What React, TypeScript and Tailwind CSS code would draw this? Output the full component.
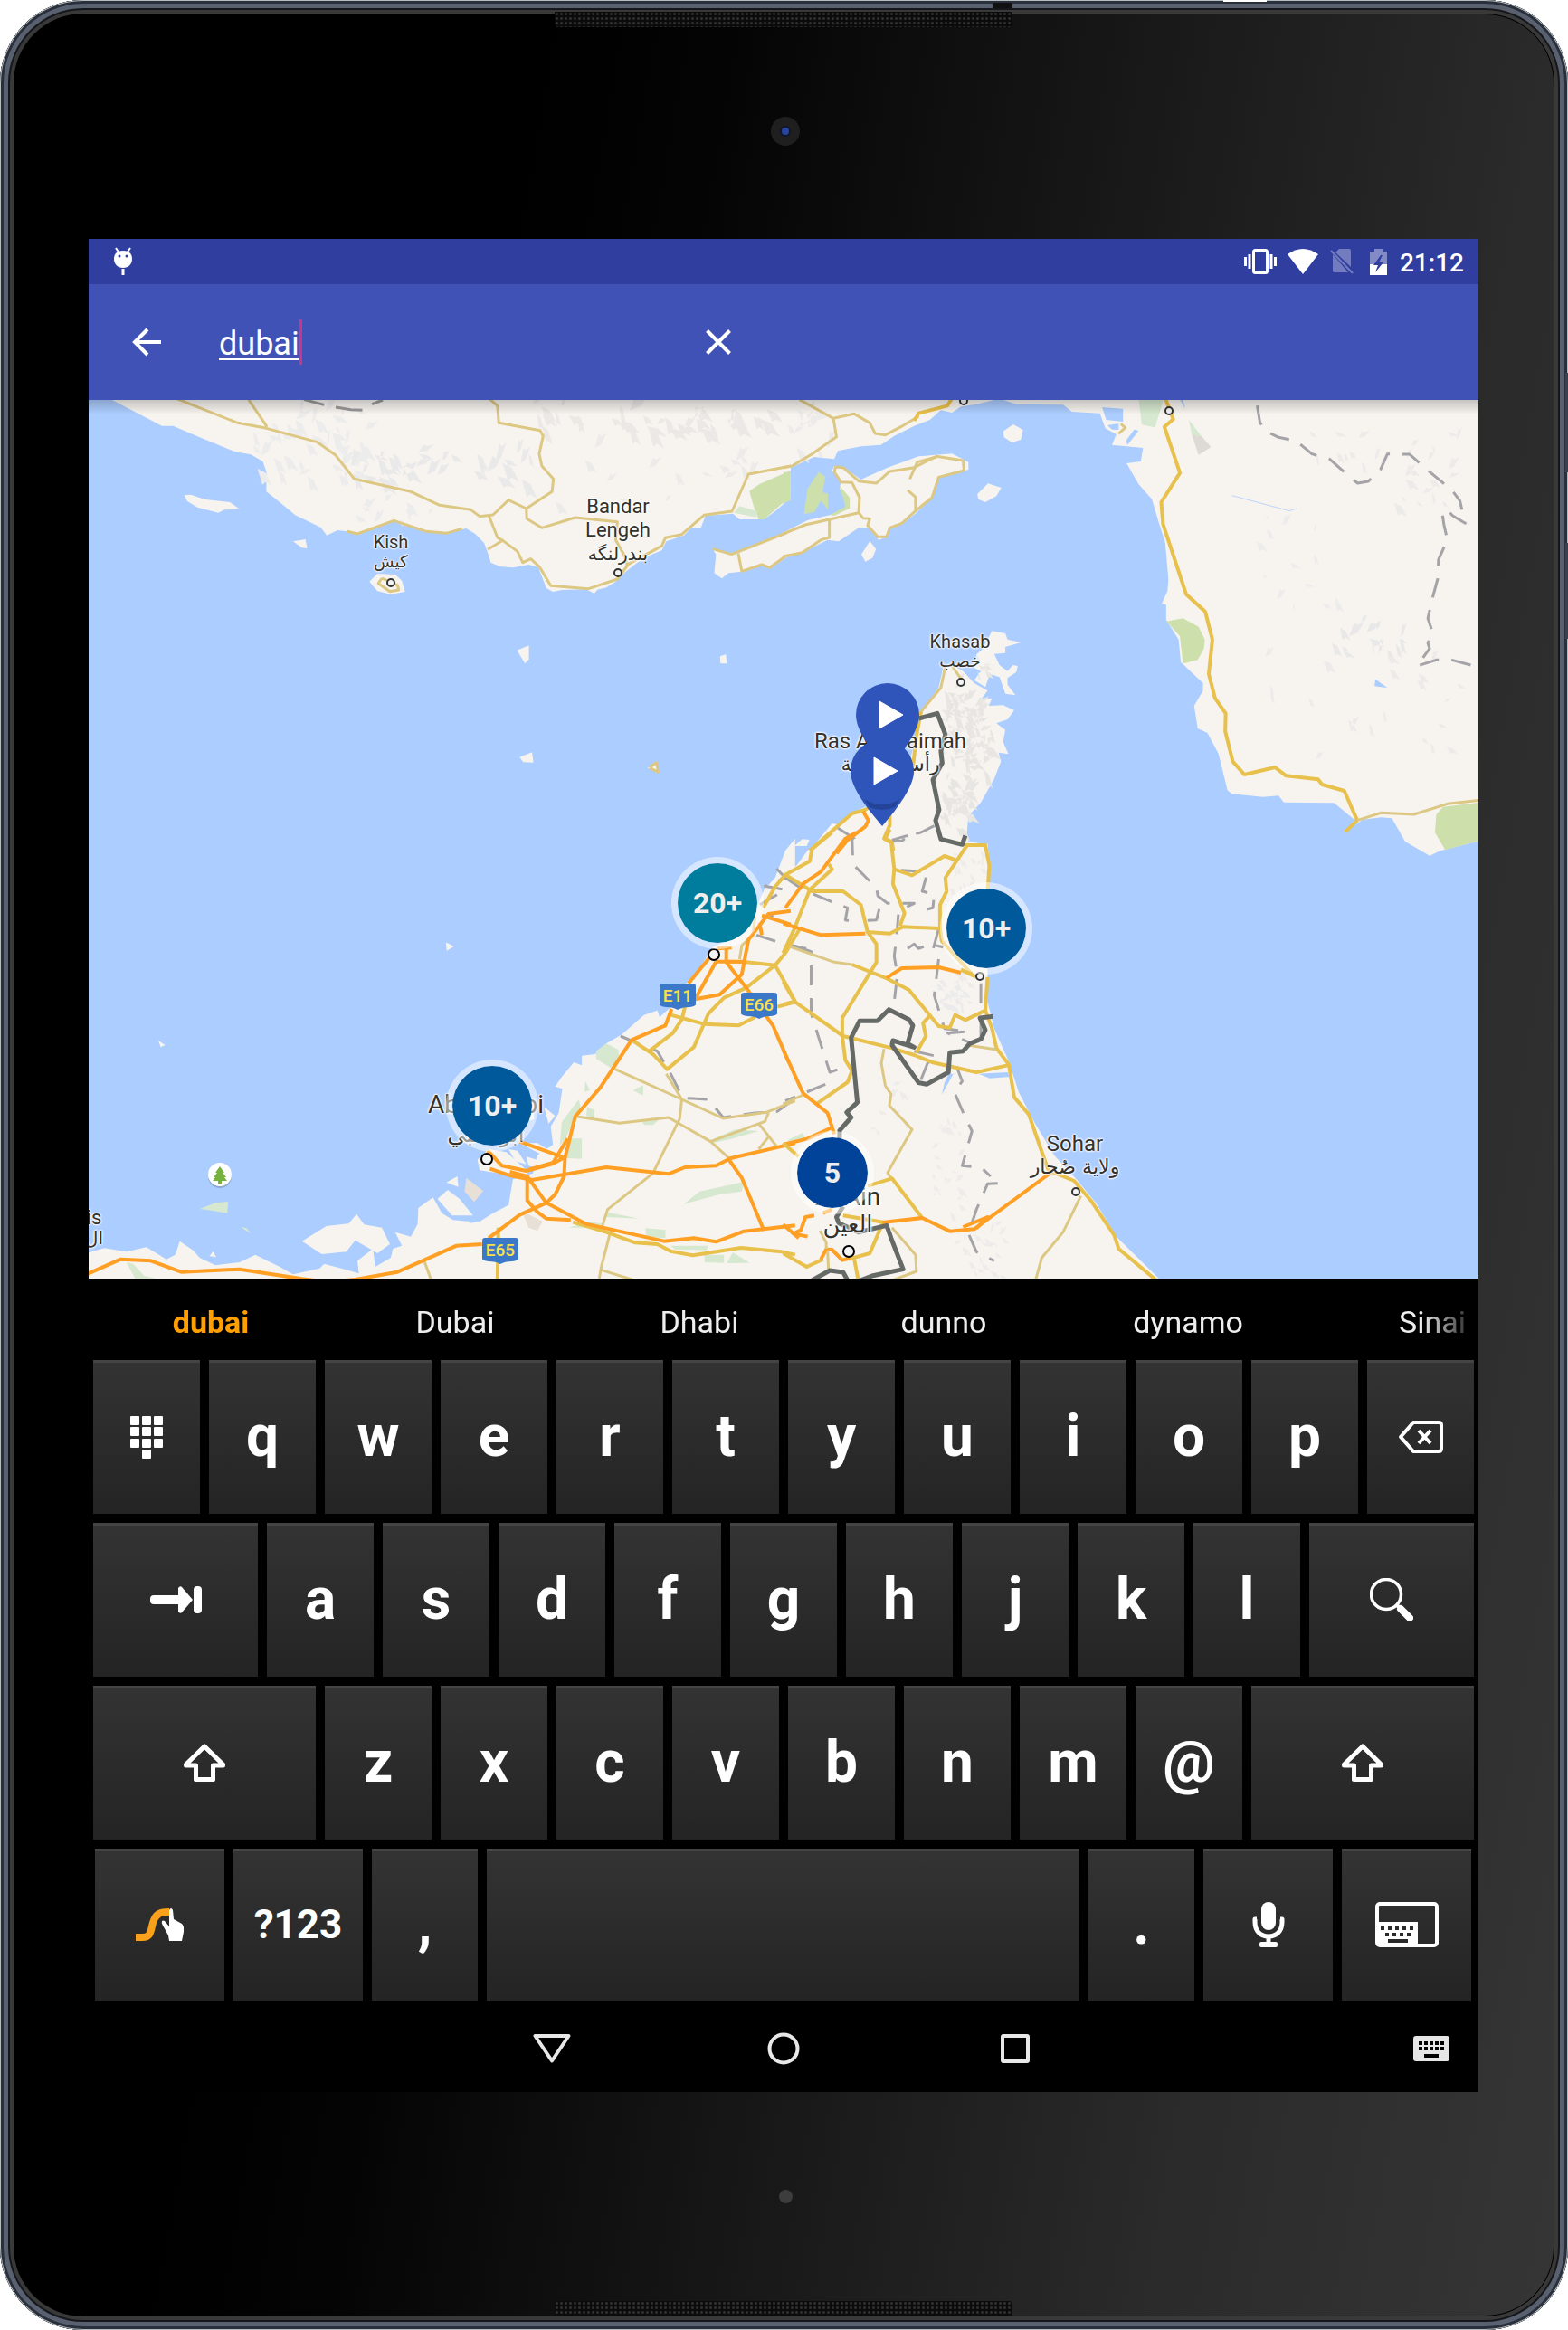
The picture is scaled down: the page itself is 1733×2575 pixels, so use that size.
import React from "react";

type Pts = string;

/* Small irregular patches that suggest hill shading inside a rectangle. */
function relief(seed: number, count: number, x: number, y: number, w: number, h: number, size: number): string {
  let s = seed;
  const rnd = () => {
    s = (s * 16807) % 2147483647;
    return s / 2147483647;
  };
  let d = "";
  for (let i = 0; i < count; i++) {
    const cx = x + rnd() * w;
    const cy = y + rnd() * h;
    const a = size * (0.3 + rnd());
    const b = size * (0.4 + rnd()) * (rnd() > 0.3 ? 1 : -1);
    d += `M${cx.toFixed(0)} ${cy.toFixed(0)}l${(a * 0.5).toFixed(0)} ${(b * 0.3).toFixed(0)}l${(a * 0.4).toFixed(0)} ${b.toFixed(0)}l${(-a * 0.4).toFixed(0)} ${(-b * 0.3).toFixed(0)}l${(-a * 0.2).toFixed(0)} ${(b * 0.2).toFixed(0)}z`;
  }
  return d;
}

const Land = ({ p }: { p: Pts }) => <polygon points={p} fill="#f7f4ef" />;
const Water = ({ p }: { p: Pts }) => <polygon points={p} fill="#accdff" />;
const Park = ({ p, soft }: { p: Pts; soft?: boolean }) => <polygon points={p} fill={soft ? "#d6e8cf" : "#cddfab"} />;

const LINE: Record<string, { stroke: string; width: number; dash?: string }> = {
  tan: { stroke: "#dcc783", width: 3 },
  yellow: { stroke: "#e8c04c", width: 4 },
  orange: { stroke: "#ff9f24", width: 4 },
  border: { stroke: "#666a67", width: 5 },
  admin: { stroke: "#a4a4a8", width: 3, dash: "22 14" },
};

function Line({ k, p }: { k: keyof typeof LINE; p: Pts }) {
  const l = LINE[k];
  return (
    <polyline
      points={p}
      fill="none"
      stroke={l.stroke}
      strokeWidth={l.width}
      strokeDasharray={l.dash}
      strokeLinejoin="round"
      vectorEffect="non-scaling-stroke"
    />
  );
}

const NW = "translate(0 -2) scale(.49107 .33333)";
const NE = "translate(770 -2) scale(.49107 .33333)";
const SW = "translate(0 478) scale(.49107 .33333)";
const SE = "translate(770 478) scale(.49107 .33333)";

function Town({ x, y, big }: { x: number; y: number; big?: boolean }) {
  return <circle cx={x} cy={y} r={big ? 6 : 4} fill="#f4f4f4" stroke={big ? "#000" : "#333"} strokeWidth={2} />;
}

function Pin({ x, y }: { x: number; y: number }) {
  return (
    <g>
      <path
        d={`M${x} ${y - 35}a35 35 0 0 1 35 35c0 16-14 34-21 44l-14 17l-14-17c-7-10-21-28-21-44a35 35 0 0 1 35-35z`}
        fill="#2f55ba"
      />
      <path d={`M${x - 9} ${y - 15}l26 15l-26 15z`} fill="#fff" stroke="#fff" strokeLinejoin="round" />
    </g>
  );
}

function Shield({ x, y, t }: { x: number; y: number; t: string }) {
  return (
    <g>
      <path d={`M${x + 3} ${y}h34q3 0 3 3v20q0 2-7 3q-8 0-13 3q-5-3-13-3q-7-1-7-3v-20q0-3 3-3z`} fill="#3c78c8" />
      <text x={x + 20} y={y + 20} textAnchor="middle" fontSize="19" fontWeight="500" fill="#fbe04d">
        {t}
      </text>
    </g>
  );
}

function MapDrawing() {
  return (
    <svg
      className="absolute inset-0 h-full w-full font-[Roboto,sans-serif]"
      viewBox="0 0 1536 971"
      preserveAspectRatio="xMidYMid slice"
      role="img"
      aria-label="Map of the Persian Gulf"
    >
      <rect width="1536" height="971" fill="#accdff" />

      {/* land */}
      <g transform={NW}>
        <Land p="45,0 165,92 190,92 250,130 330,178 365,187 392,210 400,245 400,310 430,345 465,388 522,428 536,455 560,438 590,443 605,452 687,408 760,440 800,448 850,432 870,450 890,480 900,520 905,545 925,558 955,562 990,552 1012,560 1030,630 1045,642 1065,636 1120,634 1138,648 1145,635 1165,628 1185,610 1205,580 1235,545 1265,520 1290,505 1300,475 1340,455 1355,432 1378,430 1388,390 1450,383 1465,402 1520,402 1545,375 1580,330 1580,0" />
        <path d={relief(7, 30, 370, 20, 260, 150, 34)} fill="#edecec" />
        <path d={relief(13, 16, 380, 170, 220, 90, 32)} fill="#edecec" />
        <path d={relief(19, 34, 590, 180, 400, 90, 36)} fill="#eae9ea" />
        <path d={relief(23, 40, 1000, 20, 540, 80, 40)} fill="#ebe8e6" />
        <path d={relief(91, 16, 1050, 150, 440, 200, 30)} fill="#ecebea" />
        <path d={relief(5, 10, 600, 330, 180, 90, 28)} fill="#edecec" />
        <Park p="1580,240 1510,285 1487,308 1497,360 1508,402 1520,402 1560,350 1580,340" />
        <Park soft p="1465,358 1505,375 1503,395 1452,380" />
        <Land p="215,322 230,320 262,336 318,345 340,368 305,370 292,380 245,362 222,342" />
        <Land p="460,475 488,468 492,498 480,496" />
        <Land p="632,608 650,582 690,585 705,605 712,642 680,650 650,640" />
        <Land p="964,836 991,820 991,865 982,880" />
        <Land p="1421,856 1434,850 1437,880 1422,880" />
        <Land p="970,1190 998,1174 1001,1208 978,1207" />
        <Land p="1258,1226 1278,1204 1285,1242" />
        <Land p="1405,500 1445,515 1580,445 1580,520 1533,565 1515,555 1470,575 1440,580 1425,598 1408,580 1412,520" />
      </g>
      <g transform={NE}>
        <Land p="-8,0 -8,245 20,225 65,195 110,202 118,175 170,160 215,155 245,125 290,92 325,72 350,40 375,48 395,28 430,20 470,6 480,0" />
        <path d={relief(3, 12, 5, 30, 90, 150, 34)} fill="#ecebea" />
        <Park p="-4,245 12,245 8,300 -4,320" />
        <Park p="75,245 90,260 84,312 96,318 96,370 80,340 65,378 42,385 50,300" />
        <Land p="-8,448 50,405 100,388 140,365 145,340 122,300 125,280 105,240 110,225 130,228 170,270 230,230 300,193 375,184 412,212 412,237 345,262 330,330 295,380 265,415 235,435 230,460 210,470 190,430 165,430 120,475 95,470 40,510 -8,530" />
        <Park p="122,290 145,330 145,365 110,390 100,388 135,360" />
        <Land p="490,110 513,87 535,105 530,138 510,147 492,130" />
        <Land p="432,318 456,283 486,297 475,325 450,345 434,335" />
        <Land p="190,474 204,500 196,530 180,542 171,518" />
        <Land p="478,0 520,20 625,22 645,45 708,50 720,100 745,120 735,155 805,165 800,210 768,216 795,285 825,335 840,410 855,480 862,600 860,640 847,682 857,685 857,735 885,800 890,875 940,945 940,970 920,1020 928,1095 950,1110 975,1180 995,1300 1005,1312 1075,1322 1110,1318 1122,1340 1235,1342 1283,1400 1255,1440 1300,1397 1340,1390 1365,1393 1395,1470 1450,1517 1475,1500 1575,1463 1580,0" />
        <Water p="713,30 760,35 760,78 722,72" />
        <Water p="725,90 750,84 750,105 735,104" />
        <Water p="785,104 795,108 770,155 767,140" />
        <Water p="888,5 895,5 900,35" />
        <Water p="1328,932 1355,960 1326,955" />
        <Park soft p="795,0 852,0 832,97 802,88" />
        <Park soft p="908,72 936,125 915,122" />
        <polygon points="936,125 958,162 930,188 915,122" fill="#dddad6" />
        <Park p="858,740 895,730 930,758 944,800 942,830 928,868 895,880 888,790" />
        <Park p="1480,1355 1575,1338 1575,1463 1485,1498 1462,1440 1465,1380" />
        <path d={relief(31, 14, 1180, 100, 350, 130, 26)} fill="#ecebea" />
        <path d={relief(37, 14, 1370, 200, 180, 170, 26)} fill="#ecebea" />
        <path d={relief(41, 14, 1060, 330, 180, 370, 22)} fill="#edecec" />
        <path d={relief(43, 16, 1230, 740, 160, 110, 32)} fill="#e8e8e8" />
        <path d={relief(47, 22, 1080, 780, 450, 420, 26)} fill="#ecebea" />
        <polyline points="1005,323 1135,374 1150,366" fill="none" stroke="#bdd5fa" vectorEffect="non-scaling-stroke" />
        {/* Musandam */}
        <Land p="465,772 495,780 500,800 530,810 495,825 495,845 470,848 482,885 500,905 512,885 523,888 520,908 500,928 500,950 518,985 495,980 482,925 460,915 450,958 425,935 440,905 425,895 430,850 445,830" />
        <Land p="355,893 375,885 400,905 425,945 455,970 440,1000 465,995 458,1020 490,1018 515,1035 500,1065 475,1078 495,1100 490,1140 502,1180 480,1175 485,1205 470,1262 440,1340 412,1385 408,1450 412,1470 455,1480 460,1560 20,1560 50,1500 110,1430 150,1375 180,1355 270,1250 290,1150 310,1035 345,960" />
        <path d={relief(53, 34, 350, 960, 90, 130, 30)} fill="#e8e6e3" />
        <path d={relief(57, 40, 350, 1080, 110, 160, 34)} fill="#e8e6e3" />
        <path d={relief(59, 30, 345, 1230, 70, 200, 30)} fill="#e8e6e3" />
        <path d={relief(61, 10, 430, 850, 40, 60, 18)} fill="#e8e6e3" />
      </g>
      <g transform={SW}>
        <Land p="1590,20 1568,60 1545,150 1520,190 1500,260 1480,330 1405,380 1375,450 1345,500 1310,580 1285,612 1280,590 1250,605 1200,670 1165,700 1140,735 1110,740 1110,772 1092,762 1065,810 1050,842 1066,850 1058,930 1040,975 1045,1035 1010,1070 1000,1130 955,1150 945,1235 910,1262 880,1290 840,1300 790,1310 740,1300 725,1340 690,1325 705,1370 685,1380 680,1410 645,1440 640,1380 605,1420 608,1462 580,1450 530,1430 520,1445 460,1465 430,1440 375,1400 340,1425 285,1435 250,1410 235,1385 205,1355 195,1400 175,1415 130,1375 85,1390 35,1378 -5,1395 -5,1510 1590,1510" />
        <Land p="480,1355 535,1305 585,1297 603,1265 620,1300 660,1310 678,1365 650,1395 600,1352 580,1390 525,1398" />
        <Land p="742,1245 775,1210 795,1262 820,1285 860,1290 850,1320 740,1310" />
        <Land p="785,1215 808,1185 835,1215 865,1270 818,1270" />
        <Land p="805,1160 830,1140 832,1175" />
        <polygon points="850,1145 888,1188 868,1225 846,1190" fill="#e8dfd6" />
        <Land p="875,1085 900,1050 940,1060 990,1125 975,1150 925,1130 880,1120" />
        <Land p="945,1050 965,1055 985,1100 960,1090" />
        <Land p="970,1030 1010,1030 1060,1075 1035,1080" />
        <Land p="985,1075 1020,1090 1018,1115 990,1105" />
        <Land p="1025,910 1050,940 1035,965" />
        <Land p="975,915 1000,920 1003,950 985,960" />
        <Land p="804,364 822,378 806,392" />
        <Land p="157,690 172,705 162,712" />
        <Land p="272,1405 280,1388 287,1408" />
        <Park soft p="250,1248 285,1228 314,1224 312,1262 270,1252" />
        <Park soft p="342,1308 355,1312 365,1330" />
        <Park soft p="1165,700 1192,720 1195,755 1180,785 1142,750 1142,725" />
        <Park soft p="1225,855 1248,838 1248,872" />
        <Park soft p="1118,825 1128,855 1116,860" />
        <Park soft p="1103,885 1108,915 1095,945 1075,1010 1060,1040 1065,960" />
        <Park soft p="1122,910 1138,920 1138,945 1120,940" />
        <Park soft p="1077,1015 1110,1015 1110,1082 1075,1080" />
        <Park soft p="1245,958 1285,952 1270,970 1250,970" />
        <Park soft p="1400,1020 1455,985 1508,990 1450,1015 1410,1028" />
        <Park soft p="1340,1232 1375,1190 1475,1158 1470,1190 1420,1200" />
        <Park soft p="1170,1260 1240,1280 1165,1275" />
        <Park soft p="1080,1310 1130,1290 1160,1298 1120,1310" />
        <Park soft p="1253,1312 1298,1318 1298,1345 1255,1340" />
        <Park soft p="1310,1370 1395,1370 1390,1385 1320,1382" />
        <Park soft p="1386,1400 1430,1400 1430,1427 1386,1425" />
        <Park soft p="1436,1428 1450,1392 1488,1427" />
        <Park soft p="85,1425 100,1430 125,1470 155,1480 105,1480" />
        <polygon points="975,1255 1022,1290 1010,1320 990,1310" fill="#e8dfd6" />
      </g>
      <g transform={SE}>
        <Land p="-10,110 0,125 60,90 60,50 105,-30 405,38 455,38 460,110 455,200 455,560 470,650 503,760 525,860 560,960 605,1070 655,1150 700,1230 745,1340 845,1485 845,1510 -10,1510" />
        <Land p="20,45 38,22 54,24 48,45" />
        <Water p="368,800 378,800 352,870 358,830" />
        <Water p="435,800 500,795 505,810 460,815" />
        <Park soft p="5,1020 40,995 45,1020 10,1030" />
        <path d={relief(67, 24, 370, 60, 70, 150, 20)} fill="#eeece9" />
        <path d={relief(71, 28, 340, 460, 70, 120, 22)} fill="#ebebeb" />
        <path d={relief(73, 22, 330, 930, 60, 330, 20)} fill="#eeecea" />
        <path d={relief(79, 20, 380, 1300, 110, 170, 20)} fill="#eeecea" />
        <path d={relief(83, 8, 190, 840, 80, 160, 20)} fill="#eeecea" />
      </g>

      {/* administrative lines */}
      <g transform={NW}>
        <polyline points="485,5 530,22" stroke="#999" strokeWidth="3" vectorEffect="non-scaling-stroke" />
        <polyline points="556,30 590,38 616,40" fill="none" stroke="#999" strokeWidth="3" vectorEffect="non-scaling-stroke" />
        <polyline points="638,20 662,6" stroke="#999" strokeWidth="3" vectorEffect="non-scaling-stroke" />
      </g>
      <g transform={NE}>
        <Line k="admin" p="1062,25 1068,80 1080,108 1110,130 1150,142 1185,185 1225,202 1262,250 1288,282 1312,276 1340,235 1355,185 1405,186 1440,232 1500,305 1518,340 1530,415 1502,390 1490,372 1478,378 1482,418 1490,470 1470,535 1468,600 1457,660 1446,730 1457,778 1446,812 1450,830 1422,888 1465,868 1500,868 1560,892" />
        <Line k="admin" p="118,1425 155,1460 155,1482" />
        <Line k="admin" p="335,1418 305,1440 278,1450 262,1468 235,1470" />
      </g>
      <g transform={SW}>
        <Line k="admin" p="1197,675 1250,708 1280,725 1310,800 1337,880 1395,885 1428,945 1500,930 1550,925 1600,870" />
        <Line k="admin" p="1548,120 1568,150 1522,178 1568,190 1510,240 1540,280" />
        <Line k="admin" p="1503,340 1570,372 1615,385" />
      </g>
      <g transform={SE}>
        <Line k="admin" p="150,10 152,105 182,150 205,180 208,210 230,235 290,235 255,260 250,350 245,410 252,470 242,600" />
        <Line k="admin" p="0,150 40,190 105,230 140,250 135,290 150,295" />
        <Line k="admin" p="240,25 275,10" />
        <Line k="admin" p="260,125 320,130 308,195 335,205 332,250 318,255" />
        <Line k="admin" p="185,292 205,290 212,250" />
        <Line k="admin" p="275,385 290,370 300,385 325,370 355,380" />
        <Line k="admin" p="18,375 58,395 58,600 75,680 100,795 140,775" />
        <Line k="admin" p="345,420 335,540 358,650 410,660 365,665 420,700" />
        <Line k="admin" p="440,500 440,690" />
        <Line k="admin" p="345,320 330,400" />
        <Line k="admin" p="90,835 0,890" />
        <Line k="admin" p="290,725 340,742 320,765 305,820" />
        <Line k="admin" p="385,775 398,825 380,860 405,945 420,990 398,1105 440,1110 462,1140" />
        <Line k="admin" p="478,1163 455,1165 430,1250 412,1330 430,1390 470,1420" />
      </g>

      {/* roads */}
      <g transform={NW}>
        <Line k="tan" p="195,0 335,82 400,100 515,146 555,188 598,268 725,310 790,355 860,370 880,392 910,387 945,338 985,366 1043,310 1046,268 1020,225 1014,185 1023,125 1016,107 923,82 920,25 900,0" />
        <Line k="tan" p="360,5 400,92 398,100" />
        <Line k="tan" p="985,366 986,400 1020,430 1095,396 1190,410 1186,470 1205,520 1212,555" />
        <Line k="tan" p="900,387 920,462 932,472 898,502" />
        <Line k="tan" p="932,472 965,508 977,545 995,533 1015,560 1040,622 1125,632 1190,600 1215,550 1290,490 1298,463 1335,452 1385,388 1448,375 1485,252 1580,225" />
        <Line k="tan" p="582,442 605,450 687,406 760,442 805,448 840,433" />
        <Line k="tan" p="1405,500 1447,518 1570,447" />
        <Line k="tan" p="1462,515 1470,574 1515,552 1533,562 1570,523" />
        <Line k="tan" p="660,597 695,620 698,636 678,641 652,614 660,597" />
        <Line k="tan" p="1262,1225 1278,1208 1282,1240 1262,1225" />
      </g>
      <g transform={NE}>
        <Line k="tan" p="32,5 108,67 155,52 190,82 202,117 225,122 260,95 300,60" />
        <Line k="tan" p="108,67 115,128 60,185 15,225 -5,230" />
        <Line k="yellow" p="290,75 300,50 365,25 375,0" />
        <Line k="tan" p="-5,450 45,420 165,380 167,330 150,280 125,278 110,245 113,228 130,230 165,275 205,282 235,243 290,230 340,193 400,207 402,240 345,262 330,330 292,375 262,415 235,430 228,460 208,460 185,422 190,400 175,398 165,380" />
        <Line k="tan" p="340,195 297,212 280,268" />
        <Line k="tan" p="275,305 293,328 293,375" />
        <Line k="tan" p="99,402 99,462 80,470 38,512 -5,525" />
        <Line k="tan" p="750,118 765,98 755,85" />
        <Line k="yellow" p="855,0 873,70 853,95 888,248 846,345 850,418 902,650 945,708 961,800 953,915 967,995 991,1045 990,1105 1007,1205 1033,1248 1102,1224 1127,1252 1199,1264 1208,1281 1258,1302 1287,1400 1260,1438" />
        <Line k="tan" p="1287,1400 1340,1375 1415,1380 1490,1345 1570,1332" />
        <Line k="tan" p="375,888 395,930" />
        <Line k="tan" p="360,890 350,960 305,1040" />
        <Line k="yellow" p="305,1040 295,1120 285,1250 180,1365 150,1377 55,1500" />
        <Line k="orange" p="175,1370 187,1400 180,1420 140,1465 115,1510" />
        <Line k="yellow" p="235,1380 235,1415 222,1460 240,1475 243,1500" />
      </g>
      <g transform={SW}>
        <Line k="tan" p="1185,785 1335,885 1428,948 1525,928 1590,890" />
        <Line k="tan" p="1300,800 1335,885 1330,950 1270,1130 1168,1250 1155,1310" />
        <Line k="tan" p="1100,942 1195,964 1305,945 1400,1025 1445,1085" />
        <Line k="tan" p="1530,930 1522,958 1400,1025" />
        <Line k="tan" p="1508,965 1548,1040" />
        <Line k="tan" p="1530,1010 1508,1050" />
        <Line k="tan" p="1175,1320 1153,1445 1148,1490" />
        <Line k="tan" p="1153,1450 1240,1490" />
        <Line k="tan" p="755,1420 770,1480" />
        <Line k="tan" p="1500,280 1495,340 1470,375 1465,420" />
        <Line k="yellow" p="922,1310 920,1490" />
        <Line k="yellow" p="1090,1292 1165,1325 1230,1360 1280,1365 1310,1388 1360,1402 1468,1377 1560,1390 1590,1400" />
        <Line k="yellow" p="1222,688 1270,735 1302,785 1362,712 1395,600 1430,548 1480,515 1545,440 1568,400 1600,320" />
        <Line k="yellow" p="1345,560 1335,620 1315,665 1262,725" />
        <Line k="yellow" p="1310,605 1385,635 1463,640 1500,612" />
        <Line k="yellow" p="1440,428 1480,430 1545,440 1568,500 1590,560" />
        <Line k="yellow" p="1550,578 1590,562" />
        <Line k="yellow" p="1568,140 1545,180 1518,250" />
        <Line k="orange" p="1580,260 1530,270 1485,355 1470,470 1420,538 1365,553" />
        <Line k="orange" p="1400,410 1350,500" />
        <Line k="orange" p="1412,428 1365,553" />
        <Line k="orange" p="1415,385 1447,382" />
        <Line k="orange" p="1435,385 1435,430 1480,515 1540,640 1575,760" />
        <Line k="orange" p="1412,428 1480,428" />
        <Line k="orange" p="1312,585 1298,640 1222,688 1152,845 1095,942 1072,1080 1070,1140 1050,1200 1030,1228 970,1268 900,1345" />
        <Line k="orange" p="1515,275 1580,305" />
        <Line k="orange" p="1510,300 1515,340" />
        <Line k="orange" p="970,1025 1070,1078 1045,1098 985,1122 930,1105 898,1055" />
        <Line k="orange" p="1078,1015 1045,1095 990,1118" />
        <Line k="orange" p="903,1115 950,1138 998,1152 1165,1110 1305,1132 1342,1110 1412,1105 1445,1080 1590,1030" />
        <Line k="orange" p="948,1125 987,1140 987,1220 1010,1258 1030,1280 1085,1285" />
        <Line k="orange" p="987,1140 1030,1228 1120,1298 1295,1355 1362,1345 1412,1357 1475,1322 1590,1303" />
        <Line k="orange" p="1440,1083 1470,1145 1520,1320" />
        <Line k="orange" p="-5,1465 72,1415 140,1420 208,1457 340,1448 480,1480 540,1490 600,1482 695,1457 755,1418 828,1370 885,1365" />
      </g>
      <g transform={SE}>
        <Line k="yellow" p="105,0 60,55 55,95 0,140 60,195 130,195 170,240 185,330 205,370 205,430 128,615 128,675 135,755 150,790 140,828 72,898" />
        <Line k="yellow" p="98,105 105,122 55,190 20,320 -5,400" />
        <Line k="orange" p="160,0 135,20 80,130 40,170 0,250" />
        <Line k="yellow" p="235,-10 225,20 238,30 245,122 285,142 358,78 385,92" />
        <Line k="yellow" p="410,40 360,150 363,195 348,240 348,315 352,360 420,470" />
        <Line k="yellow" p="245,122 242,170 268,268 258,310" />
        <Line k="yellow" p="183,330 235,335 265,313 348,318" />
        <Line k="orange" p="-5,302 80,340 180,335" />
        <Line k="tan" p="10,378 110,430 150,438" />
        <Line k="yellow" p="150,438 230,485 278,522 345,642 370,647 382,605 405,622 450,590 455,480" />
        <Line k="yellow" p="405,42 450,42 459,110 455,200" />
        <Line k="orange" p="228,482 262,450 345,447 395,465" />
        <Line k="yellow" p="395,455 428,478" />
        <Line k="yellow" p="-5,495 22,562 130,675 240,715 290,738 330,762 430,795 500,772" />
        <Line k="yellow" p="-5,570 22,560" />
        <Line k="yellow" p="325,608 310,632 316,675 295,730" />
        <Line k="yellow" p="450,590 465,650 475,715 503,770 515,878 548,935 575,1050 592,1120 650,1155 690,1225 740,1335 750,1380 835,1485" />
        <Line k="tan" p="410,705 475,720" />
        <Line k="tan" p="222,718 216,765 225,840 238,868 234,905 285,985 230,1128 240,1150" />
        <Line k="orange" p="-5,720 40,865 95,930 110,1000" />
        <Line k="orange" p="105,978 50,1015 -5,1035" />
        <Line k="yellow" p="-5,1030 30,1075" />
        <Line k="yellow" p="185,1172 240,1147 308,1278" />
        <Line k="yellow" p="130,1270 220,1292 190,1395 142,1415" />
        <Line k="orange" p="218,1293 308,1278 370,1322 425,1315 600,1125" />
        <Line k="orange" p="400,1308 455,1275 430,1312" />
        <Line k="orange" p="65,1270 45,1275 35,1318 18,1330 50,1340" />
        <Line k="orange" p="-5,1300 30,1345" />
        <Line k="orange" p="85,1262 105,1250" />
        <Line k="yellow" p="-5,1395 48,1440 85,1415" />
        <Line k="orange" p="80,1415 92,1382 105,1383 128,1418 145,1412" />
        <Line k="yellow" p="155,1415 165,1490" />
        <Line k="tan" p="95,1385 97,1450" />
        <Line k="tan" p="78,1320 92,1360 92,1380" />
        <Line k="tan" p="240,1310 293,1400 295,1455 240,1485" />
        <Line k="tan" p="665,1205 625,1325 577,1410 563,1485" />
        <Line k="tan" p="-5,900 40,870" />
        <Line k="border" p="468,610 438,615 450,655 440,685 415,700 400,725 370,730 367,795 318,835 300,830 240,705 242,690 290,712 275,700 287,640 278,620 233,587 207,625 167,625 148,680 162,895 138,928 148,945 122,988 122,1020" />
        <Line k="border" p="130,1240 115,1275 120,1295 165,1325 228,1303 238,1345 265,1448 195,1470 160,1490" />
        <Line k="border" p="60,1485 100,1452 130,1458 142,1490" />
      </g>
      <g transform={NE}>
        <Line k="border" p="300,1062 342,1045 360,1115 350,1170 353,1210 332,1265 346,1365 338,1400 350,1462 398,1480 405,1450" />
      </g>

      {/* towns */}
      <Town x={334} y={202} />
      <Town x={585} y={191} />
      <Town x={964} y={312} />
      <Town x={967} y={1} />
      <Town x={1194} y={12} />
      <Town x={985} y={637} />
      <Town x={1091} y={875} />
      <Town x={691} y={613} big />
      <Town x={440} y={839} big />
      <Town x={840} y={941} big />

      <Shield x={631} y={645} t="E11" />
      <Shield x={721} y={655} t="E66" />
      <Shield x={435} y={926} t="E65" />

      <circle cx="145" cy="858" r="13" fill="#8fa9cf" />
      <circle cx="145" cy="856" r="13" fill="#fff" />
      <path d="M145 847l5 7h-2l4 5h-2l3 4h-6v3h-4v-3h-6l3-4h-2l4-5h-2z" fill="#77b33c" />
    </svg>
  );
}

const labels: { x: number; y: number; lines: string[]; ar: string; cls: string }[] = [
  { x: 334, y: 147, lines: ["Kish"], ar: "کیش", cls: "text-[20px] leading-[21px]" },
  { x: 585, y: 105, lines: ["Bandar", "Lengeh"], ar: "بندرلنگه", cls: "text-[22px] leading-[26px]" },
  { x: 963, y: 257, lines: ["Khasab"], ar: "خصب", cls: "text-[20px] leading-[21px]" },
  { x: 886, y: 364, lines: ["Ras Al Khaimah"], ar: "رأس الخيمة", cls: "text-[24px] leading-[26px]" },
  { x: 439, y: 763, lines: ["Abu Dhabi"], ar: "أبو ظبي", cls: "text-[28px] leading-[32px]" },
  { x: 839, y: 866, lines: ["Al Ain"], ar: "العين", cls: "text-[28px] leading-[30px]" },
  { x: 1090, y: 809, lines: ["Sohar"], ar: "ولاية صُحار", cls: "text-[24px] leading-[26px]" },
  { x: 6, y: 892, lines: ["is"], ar: "ال", cls: "text-[22px] leading-[23px]" },
];

const clusters = [
  { x: 695, y: 556, t: "20+", cls: "size-[102px] bg-[#007c9c]" },
  { x: 992, y: 584, t: "10+", cls: "size-[102px] bg-[#00599b]" },
  { x: 446, y: 780, t: "10+", cls: "size-[102px] bg-[#00599b]" },
  { x: 822, y: 854, t: "5", cls: "size-[92px] bg-[#004399]" },
];

function MapView() {
  return (
    <section className="relative h-[971px] overflow-hidden">
      <MapDrawing />
      {labels.map((l) => (
        <div
          key={l.ar}
          style={{ left: l.x, top: l.y }}
          className={`absolute -translate-x-1/2 text-center whitespace-nowrap text-[#33322c] [text-shadow:0_0_2px_#fff,0_0_2px_#fff,0_0_3px_#fff,0_0_3px_#fff] ${l.cls}`}
        >
          {l.lines.map((t) => (
            <div key={t}>{t}</div>
          ))}
          <div lang="ar" dir="rtl" className="font-['DejaVu_Sans',sans-serif] text-[92%]">
            {l.ar}
          </div>
        </div>
      ))}
      <svg className="absolute inset-0 h-full w-full" viewBox="0 0 1536 971" preserveAspectRatio="xMidYMid slice" aria-hidden="true">
        <Pin x={883} y={348} />
        <Pin x={877} y={410} />
        <path d="M857 441q20 12 40 0l-6 9q-14 6-28 0z" fill="#24449a" />
      </svg>
      {clusters.map((c) => (
        <button
          key={c.x}
          style={{ left: c.x, top: c.y }}
          className={`absolute -translate-x-1/2 -translate-y-1/2 rounded-full border-[7px] border-white/50 bg-clip-padding text-[32px] font-bold text-[#eee] ${c.cls}`}
        >
          {c.t}
        </button>
      ))}
      <div className="absolute inset-x-0 top-0 h-4 bg-linear-to-b from-black/20 to-transparent" />
    </section>
  );
}

function StatusBar() {
  return (
    <div className="flex h-[50px] items-center bg-[#303f9f] pr-4 pl-[26px] text-white">
      <svg width="24" height="32" viewBox="0 0 24 32" className="mr-auto" aria-hidden="true">
        <path d="M4 1l4 6M20 1l-4 6" stroke="#fff" strokeWidth="2" />
        <path d="M2 13C2 7 6 4 12 4s10 3 10 9-4 10-10 10S2 19 2 13z" fill="#fff" />
        <circle cx="8" cy="10" r="1.5" fill="#303f9f" />
        <circle cx="16" cy="10" r="1.5" fill="#303f9f" />
        <path d="M12 24v7" stroke="#fff" strokeWidth="3" />
      </svg>
      <svg width="36" height="28" viewBox="0 0 36 28" className="mr-3" aria-hidden="true">
        <rect x="10.5" y="1.5" width="15" height="25" rx="2" fill="none" stroke="#fff" strokeWidth="3" />
        <path d="M1.500 9v10M6 6v16M30 6v16M34.500 9v10" stroke="#fff" strokeWidth="3" />
      </svg>
      <svg width="34" height="28" viewBox="0 0 34 28" className="mr-[13px]" aria-hidden="true">
        <path d="M0 6Q17-6 34 6L17 28z" fill="#fff" />
      </svg>
      <svg width="26" height="28" viewBox="0 0 26 28" className="mr-[18px]" aria-hidden="true">
        <path d="M10 0h11q2 0 2 2v18L6 4zM3 6l17 20H5q-2 0-2-2z" fill="#fff" opacity=".32" />
        <path d="M1 2l24 25" stroke="#fff" strokeWidth="2" opacity=".32" />
      </svg>
      <svg width="19" height="29" viewBox="0 0 19 29" className="mr-[14px]" aria-hidden="true">
        <path d="M5 0h9v3h5v14H0V3h5z" fill="#fff" opacity=".4" />
        <path d="M0 17h19v12H0z" fill="#fff" />
        <path d="M12 7L4 18h5l-3 8 9-11h-5l4-8z" fill="#303f9f" />
      </svg>
      <time className="pt-[3px] text-[28px] leading-8 font-medium">21:12</time>
    </div>
  );
}

function SearchBar() {
  return (
    <div className="flex h-32 items-center bg-[#4052b5] text-white">
      <button aria-label="Back" className="ml-12 flex w-8 justify-center">
        <svg width="32" height="32" viewBox="0 0 32 32" fill="none" stroke="#fff" strokeWidth="4">
          <path d="M32 16H4M17 2L3 16l14 14" />
        </svg>
      </button>
      <div className="relative ml-16 w-[500px]">
        <input
          aria-label="Search"
          defaultValue="dubai"
          className="block h-[50px] w-full bg-transparent pt-1 text-[36px] underline decoration-2 underline-offset-4 outline-none"
        />
        <span className="absolute top-0 left-[89px] h-[50px] w-[3px] bg-[#c4388a]" />
      </div>
      <button aria-label="Clear" className="ml-[38px]">
        <svg width="28" height="28" viewBox="0 0 28 28" stroke="#fff" strokeWidth="4">
          <path d="M1.500 1.500l25 25M26.500 1.500l-25 25" />
        </svg>
      </button>
    </div>
  );
}

const KEY =
  "flex min-w-0 items-center justify-center border-t-[3px] border-[#444] bg-linear-to-b from-[#333] to-[#242424] pb-[3px] font-bold text-white text-[64px] leading-none";

function Key({ label, children, small }: { label?: string; children?: React.ReactNode; small?: boolean }) {
  return (
    <button aria-label={label} className={KEY}>
      {small ? <span className="text-[44px]">{children}</span> : children}
    </button>
  );
}

const Shift = () => (
  <Key label="Shift">
    <svg width="46" height="42" viewBox="0 0 46 42" fill="none" stroke="#fff" strokeWidth="5" strokeLinejoin="round">
      <path d="M23 3L2.500 23v1h11v15.500h19V24h11v-1z" />
    </svg>
  </Key>
);

function Keyboard() {
  return (
    <div className="bg-black pt-[1px]">
      <div className="flex h-[89px] overflow-hidden pt-[5px] text-[34px] text-[#eee] [mask-image:linear-gradient(to_right,#000_96%,transparent_100%)]">
        {["dubai", "Dubai", "Dhabi", "dunno", "dynamo", "Sinai"].map((w, i) => (
          <button key={w} className={i === 0 ? "w-[270px] shrink-0 font-bold text-[#ffa000]" : "w-[270px] shrink-0"}>
            {w}
          </button>
        ))}
      </div>
      <div className="flex flex-col gap-[10px]">
        <div className="grid h-[170px] grid-cols-12 gap-[10px] px-[5px]">
          <Key label="Number pad">
            <svg width="36" height="47" viewBox="0 0 36 47" fill="#fff">
              {[0, 13, 26].map((x) =>
                [0, 12, 25].map((y) => <rect key={`${x}-${y}`} x={x} y={y} width="10" height="10" rx="1" />)
              )}
              <rect x="13" y="37" width="10" height="10" rx="1" />
            </svg>
          </Key>
          {"qwertyuiop".split("").map((c) => (
            <Key key={c}>{c}</Key>
          ))}
          <Key label="Backspace">
            <svg width="50" height="36" viewBox="0 0 50 36" fill="none" stroke="#fff" strokeWidth="4" strokeLinejoin="round">
              <path d="M17 2h28q3 0 3 3v26q0 3-3 3H17L3 18z" />
              <path d="M23 11l13 14M36 11L23 25" />
            </svg>
          </Key>
        </div>
        <div className="grid h-[170px] grid-cols-[182fr_repeat(9,118fr)_182fr] gap-[10px] px-[5px]">
          <Key label="Tab">
            <svg width="57" height="30" viewBox="0 0 57 30" fill="#fff">
              <rect y="10" width="36" height="10" rx="4" />
              <path d="M31 2q2-3 4-1l12 14-12 14q-2 2-4-1z" />
              <rect x="48" width="9" height="30" rx="4" />
            </svg>
          </Key>
          {"asdfghjkl".split("").map((c) => (
            <Key key={c}>{c}</Key>
          ))}
          <Key label="Search">
            <svg width="48" height="48" viewBox="0 0 48 48" fill="none" stroke="#fff">
              <circle cx="18" cy="18" r="16.500" strokeWidth="3.500" />
              <path d="M29 29l4 4" strokeWidth="4" />
              <path d="M34 34l10 10" strokeWidth="8" strokeLinecap="round" />
            </svg>
          </Key>
        </div>
        <div className="grid h-[170px] grid-cols-[246fr_repeat(8,118fr)_246fr] gap-[10px] px-[5px]">
          <Shift />
          {"zxcvbnm@".split("").map((c) => (
            <Key key={c}>{c}</Key>
          ))}
          <Shift />
        </div>
        <div className="grid h-[168px] grid-cols-[143fr_143fr_117fr_655fr_117fr_143fr_143fr] gap-[10px] pr-2 pl-[7px]">
          <Key label="Swype">
            <svg width="53" height="36" viewBox="0 0 53 36">
              <path d="M0 32h7c12 0 9-10 13-19 3-7 7-9 17-9" fill="none" stroke="#f9a11b" strokeWidth="8" />
              <path d="M37 2q2-4 4 0l1 10 9 5q3 3 2 9l-2 10H37l-1-6-7-13q-1-5 3-3l5 6z" fill="#fff" />
            </svg>
          </Key>
          <Key small>?123</Key>
          <Key>,</Key>
          <Key label="Space" />
          <Key>.</Key>
          <Key label="Voice input">
            <svg width="36" height="50" viewBox="0 0 36 50" fill="none" stroke="#fff">
              <rect x="10" y="0" width="16" height="31" rx="8" fill="#fff" stroke="none" />
              <path d="M5 19H3v3c0 10 6 16 15 16s15-6 15-16v-3h-2" strokeWidth="5" strokeLinejoin="round" />
              <path d="M18 38v8" strokeWidth="5" />
              <rect x="8" y="44" width="20" height="6" rx="2" fill="#fff" stroke="none" />
            </svg>
          </Key>
          <Key label="Keyboard layout">
            <svg width="70" height="50" viewBox="0 0 70 50">
              <rect x="2" y="2" width="66" height="46" rx="3" fill="none" stroke="#fff" strokeWidth="4" />
              <path d="M2 22h45v26H2z" fill="#fff" />
              {[6, 14, 22, 30, 38].map((x) => (
                <rect key={x} x={x} y="27" width="4" height="4" fill="#2a2a2a" />
              ))}
              {[11, 19, 27, 35].map((x) => (
                <rect key={x} x={x} y="34" width="4" height="4" fill="#2a2a2a" />
              ))}
              <rect x="14" y="41" width="22" height="4" fill="#2a2a2a" />
            </svg>
          </Key>
        </div>
      </div>
    </div>
  );
}

function NavBar() {
  return (
    <nav className="grid h-[101px] grid-cols-[1fr_256px_256px_256px_1fr] items-center bg-black pt-1">
      <span />
      <button aria-label="Back" className="flex justify-center">
        <svg width="42" height="32" viewBox="0 0 42 32" fill="none" stroke="#e8e8e8" strokeWidth="4" strokeLinejoin="round">
          <path d="M2.500 2h37L21 29.500z" />
        </svg>
      </button>
      <button aria-label="Home" className="flex justify-center">
        <svg width="36" height="36" viewBox="0 0 36 36" fill="none" stroke="#e8e8e8" strokeWidth="4">
          <circle cx="18" cy="18" r="15.500" />
        </svg>
      </button>
      <button aria-label="Recents" className="flex justify-center">
        <svg width="32" height="32" viewBox="0 0 32 32" fill="none" stroke="#e8e8e8" strokeWidth="4">
          <rect x="2" y="2" width="28" height="28" rx="1" />
        </svg>
      </button>
      <button aria-label="Switch keyboard" className="mr-8 justify-self-end">
        <svg width="40" height="28" viewBox="0 0 40 28">
          <rect width="40" height="28" rx="3" fill="#e6e6e6" />
          {[6, 12, 18, 24, 30].map((x) => (
            <g key={x} fill="#000">
              <rect x={x} y="6" width="4" height="4" />
              <rect x={x} y="12" width="4" height="4" />
            </g>
          ))}
          <rect x="12" y="20" width="16" height="4" fill="#000" />
        </svg>
      </button>
    </nav>
  );
}

const GRILLE =
  "w-[506px] bg-[#0b0b0b] bg-[radial-gradient(circle,#2e2e2e_1px,transparent_2px)] bg-[length:5px_5px]";

export default function App() {
  return (
    <main className="bg-white font-[Roboto,'DejaVu_Sans',sans-serif]">
      <div className="relative rounded-[92px] bg-[linear-gradient(100deg,#000_28%,#040404_37%,#181818_58%,#2a2a2a_78%,#363636_100%)] pr-[99px] pl-[98px] shadow-[inset_0_0_0_1px_#b5bcbe,inset_0_0_0_4px_#2a303b,inset_0_0_0_9px_#596170,inset_0_0_0_11px_#15171a,inset_0_0_0_15px_#393939,inset_0_0_0_16px_#000]">
        <span className="absolute top-[3px] left-[1097px] h-[6px] w-[22px] bg-[#111]" />
        <span className="absolute top-0 left-[1352px] h-[2px] w-12 bg-white" />
        <span className="absolute top-[412px] right-0 h-[110px] w-[3px] bg-[#3b424d]" />
        <span className="absolute top-[600px] right-0 h-[106px] w-[3px] bg-[#3b424d]" />
        <header className="flex h-[264px] flex-col items-center pt-[13px]">
          <div className={`h-[17px] rounded-b ${GRILLE}`} />
          <div className="mt-[99px] ml-1 flex size-8 items-center justify-center rounded-full bg-[#1f1f1f]">
            <span className="size-2 rounded-full bg-[#2746a0] ring-2 ring-[#10162c]" />
          </div>
        </header>
        <div>
          <StatusBar />
          <SearchBar />
          <MapView />
          <Keyboard />
          <NavBar />
        </div>
        <footer className="flex h-[263px] flex-col items-center justify-between pt-[108px] pb-[15px]">
          <span className="ml-1 size-[15px] rounded-full bg-[#3d3d3d]" />
          <div className={`h-[17px] rounded-t ${GRILLE}`} />
        </footer>
      </div>
    </main>
  );
}
